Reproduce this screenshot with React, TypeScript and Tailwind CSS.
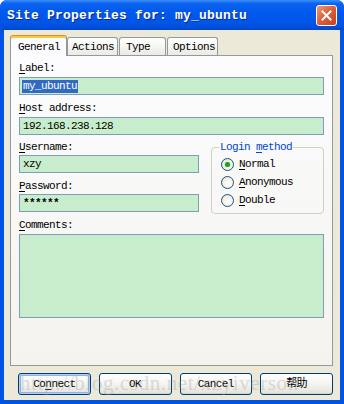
import React from 'react';

const mono = "font-['Liberation_Mono','DejaVu_Sans_Mono','Noto_Sans_CJK_SC',monospace]";

const tabs = [
  { name: 'General', w: 'w-[57px]', pl: 'pl-[7px]', active: true },
  { name: 'Actions', w: 'w-[51px]', pl: 'pl-[4px]', active: false },
  { name: 'Type', w: 'w-[47px] ml-[1px]', pl: 'pl-[6px]', active: false },
  { name: 'Options', w: 'w-[51px] ml-[1px]', pl: 'pl-[5px]', active: false },
];

// first letter underlined, like a Windows access key
const Key = ({ text, at = 0 }: { text: string; at?: number }) => (
  <>
    {text.slice(0, at)}
    <span className="underline underline-offset-[2px]">{text[at]}</span>
    {text.slice(at + 1)}
  </>
);

const Field = ({ children, className = '' }: { children?: React.ReactNode; className?: string }) => (
  <div className={`h-[18px] border border-[#7f9db9] bg-[#c7edcc] flex items-center pl-[2px] ${className}`}>
    {children}
  </div>
);

const Radio = ({ label, checked }: { label: string; checked?: boolean }) => (
  <div className="h-[18px] flex items-center">
    <span className="w-[13px] h-[13px] rounded-full border border-[#1c5180] bg-[radial-gradient(circle_at_60%_60%,#ffffff_0%,#f1efe2_60%,#dcd9c8_100%)] flex items-center justify-center">
      {checked && <span className="w-[5px] h-[5px] rounded-full bg-[#21a121] shadow-[0_0_1px_#55d555]" />}
    </span>
    <span className="ml-[5px]">
      <Key text={label} />
    </span>
  </div>
);

const Btn = ({ children, def }: { children: React.ReactNode; def?: boolean }) => (
  <button
    className={`w-[73px] h-[22px] rounded-[3px] border border-[#003c74] bg-[linear-gradient(to_bottom,#ffffff_0%,#f4f4f0_50%,#e3e2da_100%)] text-black text-[11px] tracking-[-0.6px] ${
      def ? 'shadow-[inset_0_0_0_1px_#b5cdf5,inset_0_0_0_2px_#8fb1ef]' : 'shadow-[inset_0_-1px_0_#d6d0c5]'
    }`}
  >
    {children}
  </button>
);

export default function App() {
  return (
    <div className={`${mono} relative w-[344px] h-[404px] bg-[#0054e3] rounded-t-[7px] flex flex-col overflow-hidden`}>
      {/* title bar */}
      <div className="h-[30px] shrink-0 flex items-center justify-between pl-[7px] pr-[7px] bg-[linear-gradient(to_bottom,#3d8ffa_0%,#0a62ee_12%,#0058ee_45%,#0055e5_80%,#0047cc_100%)]">
        <span className="pt-[2px] text-white font-bold text-[13px] tracking-[0.2px] [text-shadow:1px_1px_0_#0a2a8c]">
          Site Properties for: my_ubuntu
        </span>
        <span className="w-[21px] h-[21px] rounded-[3px] border border-white bg-[linear-gradient(135deg,#ee9a7c_0%,#e0613c_45%,#c8401f_100%)] flex items-center justify-center">
          <svg width="11" height="11" viewBox="0 0 11 11">
            <path d="M1.5 1.5 L9.5 9.5 M9.5 1.5 L1.5 9.5" stroke="white" strokeWidth="2" strokeLinecap="square" />
          </svg>
        </span>
      </div>

      {/* dialog body */}
      <div className="flex-1 mx-[4px] mb-[4px] bg-[#ece9d8] pt-[5px] pl-[6px] pr-[7px] flex flex-col text-[11px] tracking-[-0.6px] text-black">
        <div className="h-[20px] flex items-end relative z-10">
          {tabs.map((t) =>
            t.active ? (
              <div
                key={t.name}
                className={`${t.w} ${t.pl} h-[21px] -mb-[1px] rounded-t-[3px] border border-b-0 border-[#919b9c] border-t-[#e68b2c] bg-[#fcfcfe] shadow-[inset_0_2px_0_#ffc73c] flex items-center pt-[2px]`}
              >
                {t.name}
              </div>
            ) : (
              <div
                key={t.name}
                className={`${t.w} ${t.pl} h-[18px] rounded-t-[3px] border border-b-0 border-[#919b9c] bg-[linear-gradient(to_bottom,#ffffff_0%,#f3f3ef_60%,#ebeae4_100%)] flex items-center pt-[2px]`}
              >
                {t.name}
              </div>
            )
          )}
        </div>

        <div className="h-[311px] border border-[#919b9c] bg-[linear-gradient(to_bottom,#fcfcfe_0%,#f4f3ee_100%)] px-[8px] pt-[5px] flex flex-col">
          <div className="h-[14px] leading-[14px]">
            <Key text="Label:" />
          </div>
          <Field className="mt-[2px]">
            <span className="bg-[#316ac5] text-white leading-[13px] px-[1px]">my_ubuntu</span>
          </Field>

          <div className="h-[14px] leading-[14px] mt-[6px]">
            <Key text="Host address:" />
          </div>
          <Field className="mt-[2px]">
            <span className="pl-[1px]">192.168.238.128</span>
          </Field>

          <div className="flex items-start mt-[5px]">
            <div className="w-[180px] flex flex-col">
              <div className="h-[14px] leading-[14px]">
                <Key text="Username:" />
              </div>
              <Field className="mt-[1px]">
                <span className="pl-[1px]">xzy</span>
              </Field>
              <div className="h-[14px] leading-[14px] mt-[6px]">
                <Key text="Password:" />
              </div>
              <Field className="mt-[1px]">
                <span className="pl-[1px] font-bold">******</span>
              </Field>
            </div>

            <fieldset className="ml-[12px] w-[113px] h-[74px] border border-[#d0d0bf] rounded-[4px] pl-[9px] pt-[1px]">
              <legend className="-ml-[2px] px-[1px] h-[14px] leading-[14px] text-[#0046d5]">
                Login <Key text="method" />
              </legend>
              <Radio label="Normal" checked />
              <Radio label="Anonymous" />
              <Radio label="Double" />
            </fieldset>
          </div>

          <div className="h-[14px] leading-[14px] mt-[4px]">
            <Key text="Comments:" />
          </div>
          <div className="mt-[2px] h-[84px] border border-[#7f9db9] bg-[#c7edcc]" />
        </div>

        <div className="mt-[7px] pl-[8px] flex gap-[8px]">
          <Btn def>
            <Key text="Connect" at={2} />
          </Btn>
          <Btn>OK</Btn>
          <Btn>Cancel</Btn>
          <Btn>帮助</Btn>
        </div>
      </div>

      {/* blog watermark over the buttons */}
      <div className="absolute left-[20px] top-[368px] text-[21px] tracking-[0.6px] text-[#a0a0a0]/35 pointer-events-none font-['Liberation_Serif',serif]">
        http://blog.csdn.net/xzyiverson
      </div>
    </div>
  );
}
